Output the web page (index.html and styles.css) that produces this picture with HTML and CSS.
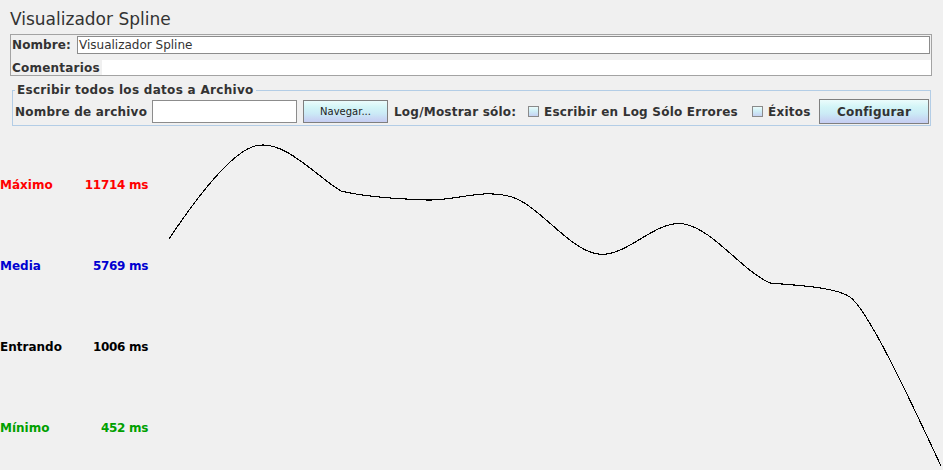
FILE: index.html
```html
<!DOCTYPE html>
<html lang="es">
<head>
<meta charset="utf-8">
<title>Visualizador Spline</title>
<link rel="stylesheet" href="styles.css">
</head>
<body>
<div class="title">Visualizador Spline</div>
<div class="panel">
  <div class="row-name">
    <span class="lbl lbl-name">Nombre:</span>
    <div class="field name-field">Visualizador Spline</div>
  </div>
  <div class="row-comments">
    <span class="lbl lbl-comments">Comentarios</span>
    <div class="comments-area"></div>
  </div>
</div>
<fieldset class="file-group">
  <legend class="legend">Escribir todos los datos a Archivo</legend>
  <div class="file-row">
    <span class="lbl lbl-file">Nombre de archivo</span>
    <div class="field file-field"></div>
    <div class="btn btn-browse">Navegar...</div>
    <span class="lbl lbl-log">Log/Mostrar sólo:</span>
    <span class="check"></span>
    <span class="lbl lbl-errors">Escribir en Log Sólo Errores</span>
    <span class="check"></span>
    <span class="lbl lbl-ok">Éxitos</span>
    <div class="btn btn-config">Configurar</div>
  </div>
</fieldset>
<div class="main">
  <div class="stats">
    <div class="stat stat-max"><span>Máximo</span><span class="val">11714 ms</span></div>
    <div class="stat stat-avg"><span>Media</span><span class="val">5769 ms</span></div>
    <div class="stat stat-in"><span>Entrando</span><span class="val">1006 ms</span></div>
    <div class="stat stat-min"><span>Mínimo</span><span class="val">452 ms</span></div>
  </div>
  <svg class="graph" width="795" height="344" viewBox="148 126 795 344" xmlns="http://www.w3.org/2000/svg">
    <path class="curve" d="M169,239 C183,218 226,154 255,146 C284,138 318,178 341,191 C365,197 398,199 427,200 C455,201 483,188 512,197 C540,206 569,250 598,254 C627,258 655,219 684,224 C713,229 741,270 770,283 C790,285 835,286.5 850,297 C868,310 908,395 941,466"/>
  </svg>
</div>
</body>
</html>
```

FILE: styles.css
```css
html, body {
  margin: 0;
  padding: 0;
}
body {
  width: 943px;
  height: 470px;
  overflow: hidden;
  background: #f0f0f0;
  font-family: "DejaVu Sans", "Liberation Sans", sans-serif;
  color: #333333;
}
.title {
  font-size: 17px;
  line-height: 21px;
  padding: 9px 0 4px 10px;
  height: 21px;
}
.panel {
  margin: 0 11px 0 10px;
  border: 1px solid #a3a3a3;
  padding-top: 1px;
}
.lbl {
  font-size: 12px;
  font-weight: bold;
  white-space: nowrap;
  letter-spacing: 0.22px;
}
.row-name {
  display: flex;
  align-items: center;
  height: 18px;
  padding: 0 1px 0 1px;
}
.lbl-name {
  flex: 0 0 65px;
  letter-spacing: 0.1px;
}
.field {
  background: #ffffff;
  border: 1px solid #8c8c8c;
  box-sizing: border-box;
}
.name-field {
  flex: 1;
  height: 18px;
  font-size: 12px;
  line-height: 16px;
  padding-left: 1px;
  color: #333333;
}
.row-comments {
  display: flex;
  align-items: center;
  height: 15px;
  margin-top: 6px;
  padding-left: 1px;
}
.lbl-comments {
  flex: 0 0 90px;
}
.comments-area {
  flex: 1;
  height: 15px;
  background: #ffffff;
}
.file-group {
  margin: 7px 12px 0 12px;
  border: 1px solid #b3cde6;
  padding: 2px 1px 1px 2px;
  min-width: 0;
}
.legend {
  font-size: 12px;
  font-weight: bold;
  line-height: 14px;
  padding: 0 2px;
  margin-left: 0;
  letter-spacing: 0.3px;
}
.file-row {
  display: flex;
  align-items: center;
  height: 25px;
}
.lbl-file {
  flex: 0 0 137px;
}
.file-field {
  flex: 0 0 145px;
  height: 23px;
}
.btn {
  box-sizing: border-box;
  border: 1px solid #7f7f7f;
  background: linear-gradient(to bottom, #ebfcfc 0%, #d3f5f7 30%, #cbeaf6 60%, #c8d6f3 85%, #c6cdf2 100%);
  display: flex;
  align-items: center;
  justify-content: center;
  color: #222222;
}
.btn-browse {
  flex: 0 0 85px;
  height: 23px;
  margin-left: 6px;
  font-size: 10px;
}
.lbl-log {
  flex: 0 0 134px;
  margin-left: 6px;
}
.check {
  flex: 0 0 11px;
  height: 11px;
  box-sizing: border-box;
  border: 1px solid #8a8a8a;
  background: linear-gradient(to bottom, #eafbfb 0%, #cfeff6 45%, #c6d2f2 100%);
  margin-right: 5px;
}
.lbl-errors {
  flex: 0 0 208px;
}
.lbl-ok {
  flex: 0 0 51px;
}
.btn-config {
  flex: 0 0 110px;
  height: 25px;
  font-size: 12px;
  font-weight: bold;
  color: #333333;
  letter-spacing: 0.2px;
}
.main {
  display: flex;
  height: 344px;
}
.stats {
  flex: 0 0 148px;
  display: flex;
  flex-direction: column;
  gap: 66px;
  padding-top: 52px;
}
.stat {
  display: flex;
  justify-content: space-between;
  height: 15px;
  line-height: 15px;
  font-size: 12px;
  font-weight: bold;
}
.val {
  letter-spacing: -0.3px;
}
.stat-max { color: #ff0000; }
.stat-avg { color: #0000d0; }
.stat-in { color: #000000; }
.stat-min { color: #00a000; }
.graph {
  display: block;
  flex: 0 0 795px;
}
.curve {
  fill: none;
  stroke: #000000;
  stroke-width: 1.1;
  shape-rendering: crispEdges;
}
```
